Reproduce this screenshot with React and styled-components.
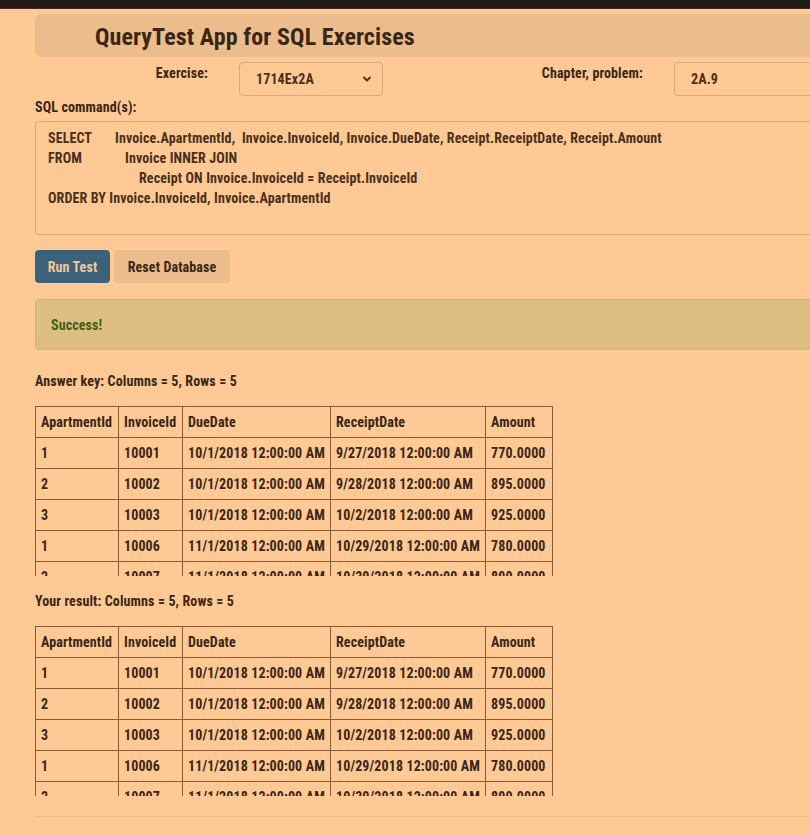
import React from "react";
import styled, { createGlobalStyle } from "styled-components";

const Global = createGlobalStyle`
  html, body { margin: 0; padding: 0; background: #fec995; overflow: hidden; }
  body {
    font-family: Roboto, "Liberation Sans", sans-serif;
    font-stretch: 75%;
    font-weight: bold;
    color: #3a2612;
    font-size: 14px;
    letter-spacing: 0.12px;
  }
`;

const TopBar = styled.div`
  height: 8px;
  background: #221c18;
  border-bottom: 1px solid #4a2416;
`;

const Main = styled.div`
  width: 900px;
  padding: 5px 0 0 35px;
  display: flex;
  flex-direction: column;
`;

const Header = styled.div`
  height: 43px;
  box-sizing: border-box;
  background: #ebbd8d;
  border-radius: 6px;
  display: flex;
  align-items: center;
  padding: 3px 0 0 60px;
`;

const Title = styled.h1`
  margin: 0;
  font-size: 24px;
  font-weight: bold;
  font-stretch: 75%;
  letter-spacing: 0.1px;
  color: #3a2612;
`;

const FormRow = styled.div`
  display: flex;
  margin-top: 5px;
  height: 34px;
`;

const Label = styled.label`
  width: ${(p) => p.$w}px;
  text-align: right;
  padding-right: 31px;
  padding-top: 3px;
  box-sizing: border-box;
  line-height: 16px;
`;

const SelectBox = styled.div`
  width: ${(p) => p.$w}px;
  height: 34px;
  box-sizing: border-box;
  border: 1px solid #d9a878;
  border-radius: 4px;
  display: flex;
  align-items: center;
  justify-content: space-between;
  padding: 0 10px 0 16px;
  color: #4a3018;
`;

const SectionLabel = styled.div`
  margin-top: 3px;
  line-height: 16px;
`;

const CodeArea = styled.div`
  margin-top: 6px;
  height: 114px;
  box-sizing: border-box;
  border: 1px solid #d9a878;
  border-radius: 4px;
  padding: 6px 12px;
  color: #4a3018;
  line-height: 20px;
`;

const CodeLine = styled.div`
  display: flex;
  padding-left: ${(p) => p.$indent || 0}px;
  white-space: pre;
`;

const Kw = styled.span`
  display: inline-block;
  width: ${(p) => p.$w}px;
`;

const Buttons = styled.div`
  display: flex;
  gap: 4px;
  margin-top: 15px;
`;

const Button = styled.button`
  font-family: inherit;
  font-stretch: 75%;
  font-weight: bold;
  font-size: 14px;
  letter-spacing: 0.12px;
  height: 33px;
  width: ${(p) => p.$w}px;
  padding: 0;
  border-radius: 4px;
  border: none;
  background: ${(p) => (p.$primary ? "#3b6278" : "#ebbd8d")};
  color: ${(p) => (p.$primary ? "#f3c698" : "#3a2612")};
  cursor: pointer;
`;

const Alert = styled.div`
  margin-top: 16px;
  height: 51px;
  box-sizing: border-box;
  background: #dcbf80;
  border: 1px solid #d3b272;
  border-radius: 4px;
  display: flex;
  align-items: center;
  padding-left: 15px;
  color: #3f5f1c;
`;

const Caption = styled.div`
  margin-top: ${(p) => p.$mt}px;
  line-height: 16px;
`;

const Scroller = styled.div`
  margin-top: 17px;
  height: 170px;
  overflow: hidden;
  width: 560px;
`;

const Table = styled.table`
  border-collapse: collapse;
  table-layout: fixed;
  width: 518px;
  color: #3a2612;
`;

const Cell = styled.td`
  border: 1px solid #8b5a33;
  height: 31px;
  padding: 0 5px;
  box-sizing: border-box;
  white-space: nowrap;
  overflow: hidden;
  text-align: left;
`;

const HeadCell = styled(Cell).attrs({ as: "th" })`
  font-weight: bold;
`;

const Col = styled.col`
  width: ${(p) => p.$w}px;
`;

const Rule = styled.hr`
  margin: 20px 0 0 0;
  border: none;
  border-top: 1px solid #f0bb88;
  width: 780px;
`;

const cols = [
  ["ApartmentId", 83],
  ["InvoiceId", 64],
  ["DueDate", 148],
  ["ReceiptDate", 155],
  ["Amount", 67],
];

const rows = [
  ["1", "10001", "10/1/2018 12:00:00 AM", "9/27/2018 12:00:00 AM", "770.0000"],
  ["2", "10002", "10/1/2018 12:00:00 AM", "9/28/2018 12:00:00 AM", "895.0000"],
  ["3", "10003", "10/1/2018 12:00:00 AM", "10/2/2018 12:00:00 AM", "925.0000"],
  ["1", "10006", "11/1/2018 12:00:00 AM", "10/29/2018 12:00:00 AM", "780.0000"],
  ["2", "10007", "11/1/2018 12:00:00 AM", "10/30/2018 12:00:00 AM", "890.0000"],
];

function ResultTable() {
  return (
    <Scroller>
      <Table>
        <colgroup>
          {cols.map(([c, w]) => (
            <Col key={c} $w={w} />
          ))}
        </colgroup>
        <thead>
          <tr>
            {cols.map(([c]) => (
              <HeadCell key={c}>{c}</HeadCell>
            ))}
          </tr>
        </thead>
        <tbody>
          {rows.map((r, i) => (
            <tr key={i}>
              {r.map((v, j) => (
                <Cell key={j}>{v}</Cell>
              ))}
            </tr>
          ))}
        </tbody>
      </Table>
    </Scroller>
  );
}

const Chevron = () => (
  <svg width="10" height="10" viewBox="0 0 10 10">
    <path d="M2 3.5 L5 6.5 L8 3.5" fill="none" stroke="#4a3018" strokeWidth="1.8" strokeLinecap="round" strokeLinejoin="round" />
  </svg>
);

export default function App() {
  return (
    <>
      <Global />
      <TopBar />
      <Main>
        <Header>
          <Title>QueryTest App for SQL Exercises</Title>
        </Header>
        <FormRow>
          <Label $w={204}>Exercise:</Label>
          <SelectBox $w={144}>
            <span>1714Ex2A</span>
            <Chevron />
          </SelectBox>
          <Label $w={291}>Chapter, problem:</Label>
          <SelectBox $w={200}>
            <span>2A.9</span>
          </SelectBox>
        </FormRow>
        <SectionLabel>SQL command(s):</SectionLabel>
        <CodeArea>
          <CodeLine>
            <Kw $w={67}>SELECT</Kw>
            <span>Invoice.ApartmentId,  Invoice.InvoiceId, Invoice.DueDate, Receipt.ReceiptDate, Receipt.Amount</span>
          </CodeLine>
          <CodeLine>
            <Kw $w={77}>FROM</Kw>
            <span>Invoice INNER JOIN</span>
          </CodeLine>
          <CodeLine $indent={91}>Receipt ON Invoice.InvoiceId = Receipt.InvoiceId</CodeLine>
          <CodeLine>ORDER BY Invoice.InvoiceId, Invoice.ApartmentId</CodeLine>
        </CodeArea>
        <Buttons>
          <Button $primary $w={75}>Run Test</Button>
          <Button $w={116}>Reset Database</Button>
        </Buttons>
        <Alert>Success!</Alert>
        <Caption $mt={23}>Answer key: Columns = 5, Rows = 5</Caption>
        <ResultTable />
        <Caption $mt={17}>Your result: Columns = 5, Rows = 5</Caption>
        <ResultTable />
        <Rule />
      </Main>
    </>
  );
}
